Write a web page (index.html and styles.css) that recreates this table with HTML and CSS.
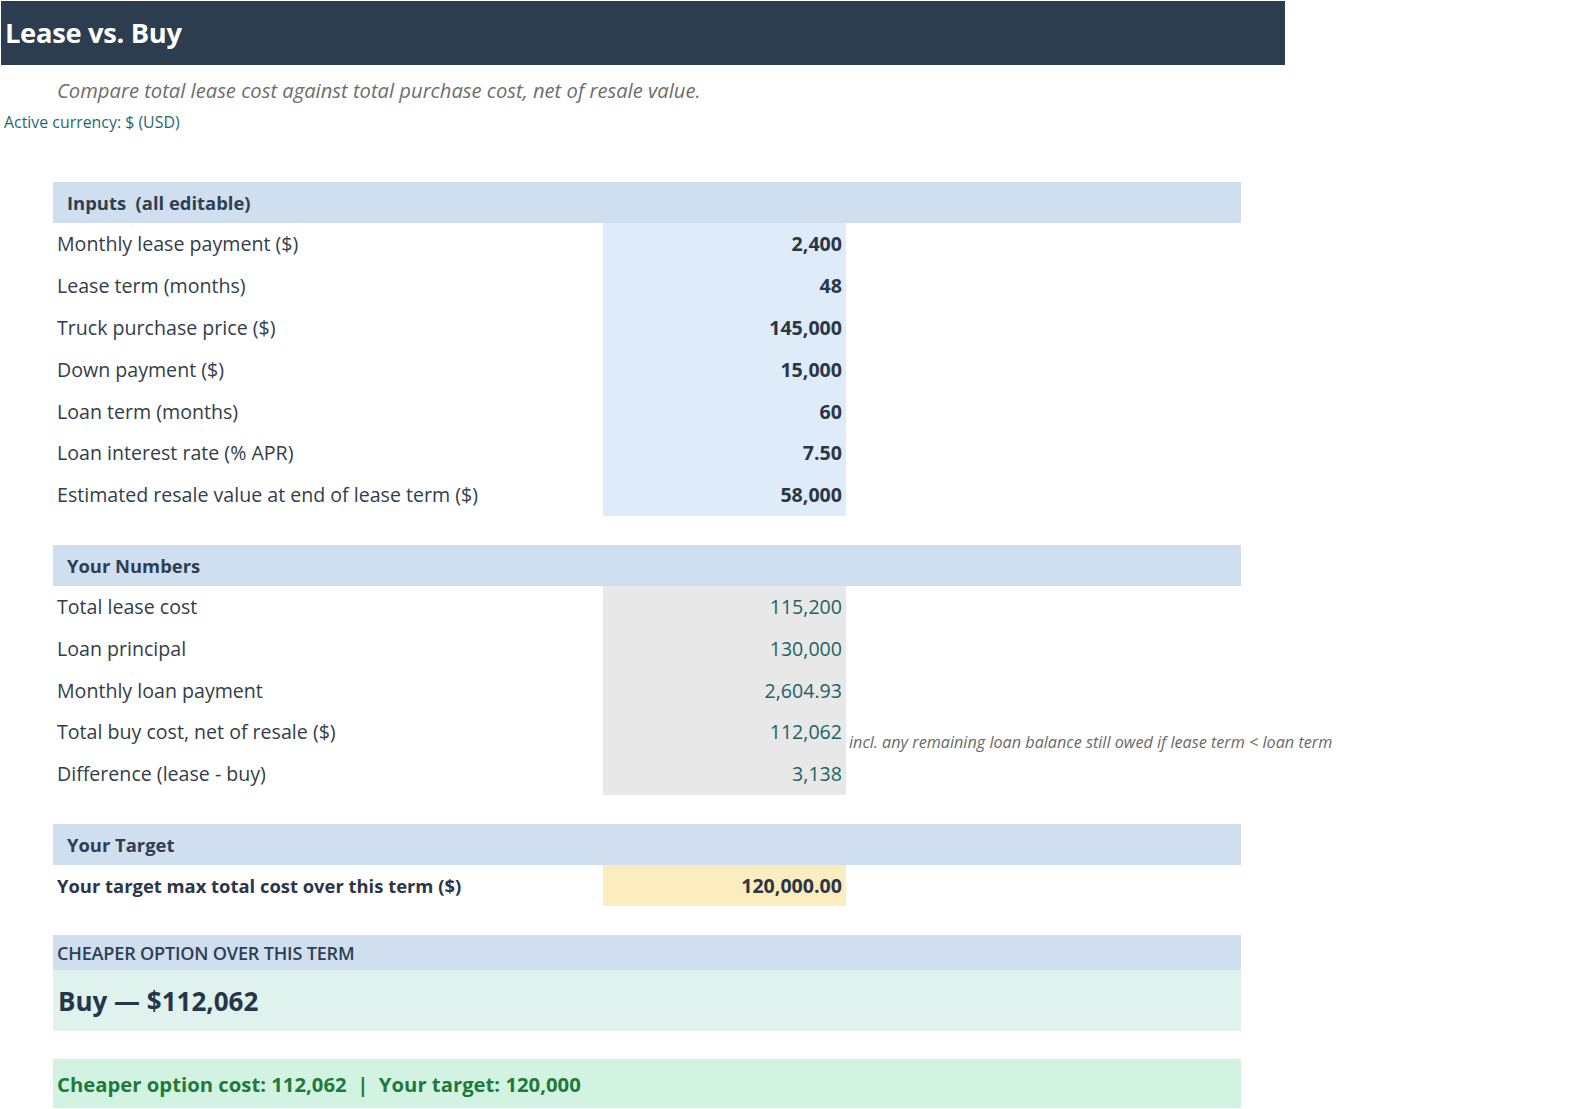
FILE: index.html
```html
<!DOCTYPE html>
<html lang="en">
<head>
<meta charset="utf-8">
<title>Lease vs. Buy</title>
<link rel="stylesheet" href="styles.css">
</head>
<body>
<div class="titlebar"><h1>Lease vs. Buy</h1></div>
<p class="subtitle">Compare total lease cost against total purchase cost, net of resale value.</p>
<p class="currency">Active currency: $ (USD)</p>

<main class="sheet">
  <section class="block">
    <div class="sec-head">Inputs&nbsp; (all editable)</div>
    <div class="row"><span class="label">Monthly lease payment ($)</span><span class="val input">2,400</span></div>
    <div class="row"><span class="label">Lease term (months)</span><span class="val input">48</span></div>
    <div class="row"><span class="label">Truck purchase price ($)</span><span class="val input">145,000</span></div>
    <div class="row"><span class="label">Down payment ($)</span><span class="val input">15,000</span></div>
    <div class="row"><span class="label">Loan term (months)</span><span class="val input">60</span></div>
    <div class="row"><span class="label">Loan interest rate (% APR)</span><span class="val input">7.50</span></div>
    <div class="row"><span class="label">Estimated resale value at end of lease term ($)</span><span class="val input">58,000</span></div>
  </section>

  <section class="block">
    <div class="sec-head">Your Numbers</div>
    <div class="row"><span class="label">Total lease cost</span><span class="val calc">115,200</span></div>
    <div class="row"><span class="label">Loan principal</span><span class="val calc">130,000</span></div>
    <div class="row"><span class="label">Monthly loan payment</span><span class="val calc">2,604.93</span></div>
    <div class="row"><span class="label">Total buy cost, net of resale ($)</span><span class="val calc">112,062</span><span class="note">incl. any remaining loan balance still owed if lease term &lt; loan term</span></div>
    <div class="row"><span class="label">Difference (lease - buy)</span><span class="val calc">3,138</span></div>
  </section>

  <section class="block">
    <div class="sec-head">Your Target</div>
    <div class="row target"><span class="label">Your target max total cost over this term ($)</span><span class="val goal">120,000.00</span></div>
  </section>

  <section class="block">
    <div class="sec-head caps">CHEAPER OPTION OVER THIS TERM</div>
    <div class="verdict">Buy — $112,062</div>
  </section>

  <div class="summary">Cheaper option cost: 112,062&nbsp; |&nbsp; Your target: 120,000</div>
</main>
</body>
</html>
```

FILE: styles.css
```css
* { box-sizing: border-box; }
html, body { margin: 0; padding: 0; background: #ffffff; }
body {
  font-family: "Open Sans", "Noto Sans", sans-serif;
  color: #333d4a;
}
.titlebar {
  width: 1284px;
  height: 64px;
  margin-top: 1px;
  margin-left: 1px;
  background: #2d3d50;
  display: flex;
  align-items: center;
}
.titlebar h1 {
  margin: -2px 0 0 4px;
  font-size: 27.3px;
  font-weight: 700;
  color: #ffffff;
  letter-spacing: -0.3px;
}
.subtitle {
  margin: 11px 0 0 57px;
  font-size: 20.2px;
  line-height: 28px;
  font-style: italic;
  color: #6d6d6d;
}
.currency {
  margin: 8px 0 0 4px;
  font-size: 15.9px;
  line-height: 20px;
  color: #1e6a6a;
}
.sheet {
  margin: 50px 0 0 53px;
  width: 1188px;
  display: flex;
  flex-direction: column;
  gap: 29px;
}
.block { display: flex; flex-direction: column; }
.sec-head {
  height: 41px;
  background: #cfdff0;
  display: flex;
  align-items: center;
  padding-left: 14px;
  font-size: 18.4px;
  font-weight: 700;
  color: #2f3e51;
}
.sec-head.caps {
  height: 35px;
  padding-left: 4px;
  font-size: 18.1px;
  font-weight: 600;
  letter-spacing: -0.2px;
}
.row {
  height: 41.8px;
  display: flex;
  align-items: stretch;
}
.label {
  flex: 0 0 550px;
  padding-left: 4px;
  display: flex;
  align-items: center;
  font-size: 19.6px;
  color: #333d4a;
  white-space: nowrap;
}
.val {
  flex: 0 0 243px;
  padding-right: 4px;
  display: flex;
  align-items: center;
  justify-content: flex-end;
  font-size: 19.6px;
}
.val.input { background: #ddecf8; font-weight: 700; color: #2b3646; }
.val.calc { background: #e8e8e8; color: #1d6467; }
.val.goal { background: #fbedbd; font-weight: 700; color: #2b3646; }
.target .label { font-weight: 700; color: #2b3646; font-size: 18.4px; }
.note {
  flex: 0 0 auto;
  display: flex;
  align-items: flex-end;
  padding: 0 0 0 3px;
  font-size: 16.2px;
  font-style: italic;
  color: #6a6a6a;
  white-space: nowrap;
}
.verdict {
  height: 61px;
  background: #dff2ee;
  display: flex;
  align-items: center;
  padding-left: 5px;
  font-size: 26px;
  font-weight: 700;
  color: #26364a;
}
.summary {
  height: 49px;
  background: #d3f3e2;
  display: flex;
  align-items: center;
  padding-left: 4px;
  font-size: 20.3px;
  font-weight: 700;
  color: #1e7a3a;
  margin-top: -1px;
}
```
